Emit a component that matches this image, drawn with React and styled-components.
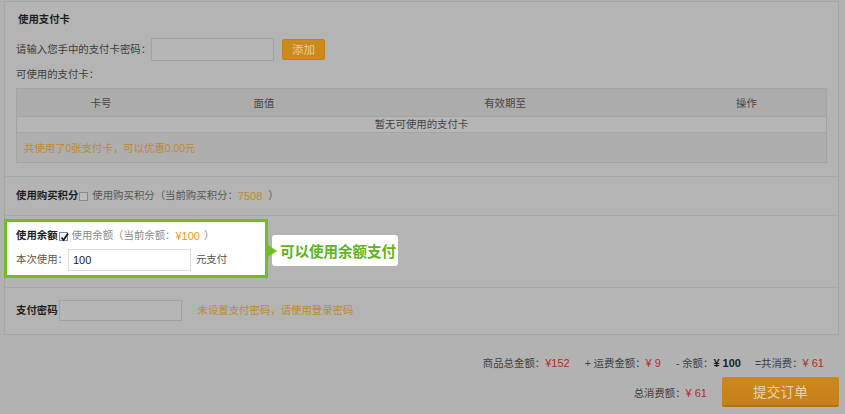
import React from "react";
import styled, { createGlobalStyle } from "styled-components";

const GlobalStyle = createGlobalStyle`
  html, body { margin: 0; padding: 0; }
  body {
    background: #b2b2b2;
    font-family: "Liberation Sans", "Noto Sans CJK SC", sans-serif;
    font-size: 10.4px;
    color: #3e3e3e;
  }
  * { box-sizing: border-box; }
`;

const Page = styled.div`
  width: 845px;
  height: 414px;
  padding-top: 1px;
  overflow: hidden;
`;

const Panel = styled.div`
  margin-left: 4px;
  width: 835px;
  border: 1px solid #a6a6a6;
  background: #b4b4b4;
`;

const Section = styled.div`
  position: relative;
  padding: ${(p) => p.$pad || "0 11px 0 12px"};
  border-bottom: ${(p) => (p.$last ? "none" : "1px solid #a8a8a8")};
`;

const Title = styled.div`
  font-weight: bold;
  color: #1f1f1f;
  line-height: 16px;
  padding-left: ${(p) => p.$indent || 0}px;
`;

const Row = styled.div`
  display: flex;
  align-items: center;
  height: ${(p) => p.$h || 16}px;
  margin-top: ${(p) => p.$mt || 0}px;
  line-height: 16px;
  white-space: nowrap;
`;

const Label = styled.span`
  color: ${(p) => p.$c || "#404040"};
  font-weight: ${(p) => (p.$bold ? "bold" : "normal")};
  margin-left: ${(p) => p.$ml || 0}px;
  font-size: ${(p) => p.$fs || "inherit"};
`;

const TextInput = styled.div`
  width: ${(p) => p.$w || 123}px;
  height: ${(p) => p.$h || 23}px;
  border: 1px solid ${(p) => p.$bd || "#a2a2a2"};
  background: ${(p) => p.$bg || "#b6b6b6"};
  margin-left: ${(p) => p.$ml || 0}px;
  display: flex;
  align-items: center;
  padding-left: 4px;
  font-size: 11px;
  color: #222;
`;

const SmallButton = styled.div`
  width: 43px;
  height: 21px;
  margin-left: 8px;
  border-radius: 2px;
  background: #cd8a1c;
  border: 1px solid #c38219;
  color: #e9cf9f;
  font-size: 11.5px;
  display: flex;
  align-items: center;
  justify-content: center;
`;

const Table = styled.div`
  margin-top: 5px;
  border: 1px solid #a4a4a4;
`;

const HeadRow = styled.div`
  display: grid;
  grid-template-columns: 168px 158px 324px 1fr;
  height: 28px;
  background: #acacac;
  border-bottom: 1px solid #a4a4a4;
  align-items: center;
  text-align: center;
  color: #464646;
`;

const EmptyRow = styled.div`
  height: 16px;
  line-height: 15px;
  text-align: center;
  background: #b6b6b6;
  border-bottom: 1px solid #a4a4a4;
  color: #444;
`;

const FootRow = styled.div`
  height: 29px;
  display: flex;
  align-items: center;
  padding-left: 7px;
  background: #aeaeae;
  color: #c08a2c;
`;

const Box = styled.span`
  display: inline-block;
  width: 9px;
  height: 9px;
  margin-left: 1px;
  margin-right: 4px;
  border: 1px solid ${(p) => (p.$on ? "#6b8fb8" : "#8a8a8a")};
  background: ${(p) => (p.$on ? "#f2f5fa" : "#bdbdbd")};
  position: relative;
  svg { position: absolute; left: 0; top: -1px; }
`;

const Spotlight = styled.div`
  position: relative;
  margin-left: -13px;
  width: 264px;
  border: 3px solid #6fc01f;
  background: #ffffff;
  padding: 6px 0 4px 9px;
  color: #333;
`;

const Callout = styled.div`
  position: absolute;
  left: calc(100% + 7px);
  top: 13px;
  width: 126px;
  height: 31px;
  background: #ffffff;
  border-radius: 3px;
  display: flex;
  align-items: center;
  padding-left: 8px;
  color: #5db41c;
  font-weight: bold;
  font-size: 14.5px;
  white-space: nowrap;
  &::before {
    content: "";
    position: absolute;
    left: -4px;
    top: 10px;
    border-left: 9px solid #6fc01f;
    border-top: 6.5px solid transparent;
    border-bottom: 6.5px solid transparent;
  }
`;

const Summary = styled.div`
  display: flex;
  justify-content: flex-end;
  align-items: center;
  padding-right: 21px;
  margin-top: 19px;
  height: 16px;
  color: #404040;
  white-space: nowrap;
`;

const SumItem = styled.span`
  margin-left: ${(p) => p.$ml || 14}px;
`;

const Money = styled.span`
  color: ${(p) => (p.$dark ? "#1e1e1e" : "#b22d2b")};
  font-weight: ${(p) => (p.$dark ? "bold" : "normal")};
  font-size: 11px;
`;

const SubmitRow = styled.div`
  display: flex;
  justify-content: flex-end;
  align-items: center;
  padding-right: 6px;
  margin-top: 7px;
  white-space: nowrap;
`;

const SubmitButton = styled.div`
  width: 117px;
  height: 30px;
  margin-left: 15px;
  background: linear-gradient(#cb881d, #c5811a);
  border-bottom: 2px solid #b5730f;
  border-radius: 2px;
  color: #e6d3ae;
  font-size: 13.5px;
  display: flex;
  align-items: center;
  justify-content: center;
  letter-spacing: 0.3px;
`;

const Check = () => (
  <svg width="9" height="10" viewBox="0 0 9 10">
    <path d="M1.5 5.5 L3.5 8 L8 1.5" fill="none" stroke="#1a1a1a" strokeWidth="1.8" />
  </svg>
);

export default function App() {
  return (
    <>
      <GlobalStyle />
      <Page>
        <Panel>
          <Section $pad="10px 11px 13px 11px">
            <Title $indent={2}>使用支付卡</Title>
            <Row $h={23} $mt={10}>
              <Label>请输入您手中的支付卡密码：</Label>
              <TextInput $w={123} $h={23} />
              <SmallButton>添加</SmallButton>
            </Row>
            <Row $mt={6}>
              <Label>可使用的支付卡：</Label>
            </Row>
            <Table>
              <HeadRow>
                <span>卡号</span>
                <span>面值</span>
                <span>有效期至</span>
                <span>操作</span>
              </HeadRow>
              <EmptyRow>暂无可使用的支付卡</EmptyRow>
              <FootRow>共使用了0张支付卡，可以优惠0.00元</FootRow>
            </Table>
          </Section>
          <Section $pad="11px 11px 11px 11px">
            <Row>
              <Label $bold $c="#1f1f1f">使用购买积分</Label>
              <Box />
              <Label $c="#575757">使用购买积分（当前购买积分：</Label>
              <Label $c="#c08a2c" $fs="11px">7508</Label>
              <Label $c="#575757" $ml={6}>）</Label>
            </Row>
          </Section>
          <Section $pad="3px 11px 9px 12px">
            <Spotlight>
              <Row>
                <Label $bold $c="#222">使用余额</Label>
                <Box $on>
                  <Check />
                </Box>
                <Label $c="#8a8a8a">使用余额（当前余额：</Label>
                <Label $c="#f29a1c" $fs="11px">¥100</Label>
                <Label $c="#8a8a8a" $ml={4}>）</Label>
              </Row>
              <Row $h={22} $mt={5}>
                <Label $c="#555">本次使用：</Label>
                <TextInput $w={123} $h={22} $bd="#dcdcdc" $bg="#fff">100</TextInput>
                <Label $c="#555" $ml={5}>元支付</Label>
              </Row>
              <Callout>可以使用余额支付</Callout>
            </Spotlight>
          </Section>
          <Section $pad="12px 11px 13px 11px" $last>
            <Row $h={21}>
              <Label $bold $c="#1f1f1f">支付密码</Label>
              <TextInput $w={123} $h={21} $ml={1} />
              <Label $c="#c08a2c" $ml={16}>未设置支付密码，请使用登录密码</Label>
            </Row>
          </Section>
        </Panel>
        <Summary>
          <SumItem $ml={0}>
            商品总金额：<Money>¥152</Money>
          </SumItem>
          <SumItem $ml={15}>
            + 运费金额：<Money>¥ 9</Money>
          </SumItem>
          <SumItem $ml={15}>
            - 余额：<Money $dark>¥ 100</Money>
          </SumItem>
          <SumItem $ml={14}>
            =共消费：<Money>¥ 61</Money>
          </SumItem>
        </Summary>
        <SubmitRow>
          <span>
            总消费额：<Money>¥ 61</Money>
          </span>
          <SubmitButton>提交订单</SubmitButton>
        </SubmitRow>
      </Page>
    </>
  );
}
